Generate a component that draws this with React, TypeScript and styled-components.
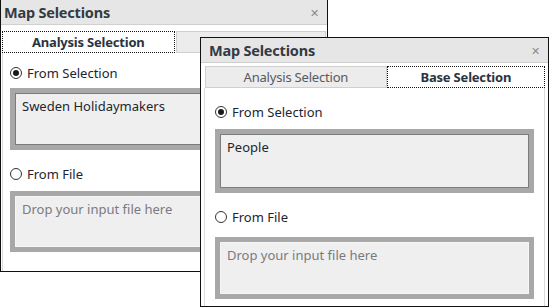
import React from "react";
import styled, { createGlobalStyle } from "styled-components";

const GlobalStyle = createGlobalStyle`
  html, body {
    margin: 0;
    padding: 0;
    background: #ffffff;
    font-family: "Noto Sans", "Open Sans", sans-serif;
  }
`;

const Desktop = styled.div`
  position: relative;
  width: 550px;
  height: 308px;
  overflow: hidden;
  background: #ffffff;
`;

const Frame = styled.div<{ $left: number; $top: number; $width: number; $height: number }>`
  position: absolute;
  left: ${(p) => p.$left}px;
  top: ${(p) => p.$top}px;
  width: ${(p) => p.$width}px;
  height: ${(p) => p.$height}px;
  box-sizing: border-box;
  border: 1px solid #111111;
  background: #ffffff;
  display: flex;
  flex-direction: column;
`;

const TitleBar = styled.div<{ $pad: number }>`
  height: 24px;
  flex: none;
  display: flex;
  align-items: center;
  justify-content: space-between;
  padding: 0 8px 0 ${(p) => p.$pad}px;
  background: #e6e6e6;
  border-bottom: 1px solid #cfcfcf;
`;

const Title = styled.span`
  font-size: 14.5px;
  font-weight: 700;
  color: #333a44;
  letter-spacing: -0.2px;
`;

const Close = styled.span`
  font-size: 11px;
  color: #8a8a8a;
  line-height: 1;
`;

const TabRow = styled.div<{ $top: number; $side: number }>`
  display: flex;
  margin: ${(p) => p.$top}px ${(p) => p.$side}px 0;
  height: 22px;
  flex: none;
`;

const Tab = styled.div<{ $active?: boolean; $grow: number }>`
  flex: ${(p) => p.$grow} 1 0;
  display: flex;
  align-items: center;
  justify-content: center;
  box-sizing: border-box;
  font-size: 13px;
  letter-spacing: -0.2px;
  font-weight: ${(p) => (p.$active ? 700 : 400)};
  color: ${(p) => (p.$active ? "#2b3340" : "#555a60")};
  background: ${(p) => (p.$active ? "#ffffff" : "#ececec")};
  border: ${(p) => (p.$active ? "1px dotted #111111" : "1px solid #cfcfcf")};
  margin-left: ${(p) => (p.$active ? "0" : "1px")};
`;

const Panel = styled.div<{ $pad: number; $side: number }>`
  flex: 1;
  display: flex;
  flex-direction: column;
  margin: 0 ${(p) => p.$side}px;
  padding: 0 ${(p) => p.$pad}px;
  border-left: 1px solid #dcdcdc;
  border-right: 1px solid #dcdcdc;
`;

const RadioRow = styled.label<{ $top: number }>`
  display: flex;
  align-items: center;
  gap: 5px;
  height: 14px;
  margin-top: ${(p) => p.$top}px;
  font-size: 13px;
  color: #1e2530;
`;

const RadioCircle = styled.span<{ $checked?: boolean }>`
  width: 12px;
  height: 12px;
  box-sizing: border-box;
  border-radius: 50%;
  border: 1px solid #333333;
  background: #ffffff;
  display: flex;
  align-items: center;
  justify-content: center;
  flex: none;

  &::after {
    content: "";
    width: 6px;
    height: 6px;
    border-radius: 50%;
    background: ${(p) => (p.$checked ? "#1a1a1a" : "transparent")};
  }
`;

const Field = styled.div<{ $top: number; $height: number; $placeholder?: boolean }>`
  margin-top: ${(p) => p.$top}px;
  height: ${(p) => p.$height}px;
  box-sizing: border-box;
  border: 5px solid #a8a8a8;
  background: #a8a8a8;
  flex: none;

  & > div {
    height: 100%;
    box-sizing: border-box;
    border: 1px solid ${(p) => (p.$placeholder ? "#f6f6f6" : "#7c7c7c")};
    background: #efefef;
    padding: 3px 6px;
    font-size: 13px;
    color: ${(p) => (p.$placeholder ? "#7a7a80" : "#1e2530")};
  }
`;

type Layout = {
  left: number;
  top: number;
  width: number;
  height: number;
  titlePad: number;
  tabTop: number;
  tabSide: number;
  pad: number;
  radioTop: number;
  boxTop: number;
  boxHeight: number;
  fileTop: number;
  dropTop: number;
  dropHeight: number;
};

function Dialog({
  layout,
  active,
  selection,
}: {
  layout: Layout;
  active: "analysis" | "base";
  selection: string;
}) {
  return (
    <Frame $left={layout.left} $top={layout.top} $width={layout.width} $height={layout.height}>
      <TitleBar $pad={layout.titlePad}>
        <Title>Map Selections</Title>
        <Close>✕</Close>
      </TitleBar>
      <TabRow $top={layout.tabTop} $side={layout.tabSide}>
        <Tab $grow={1.15} $active={active === "analysis"}>
          Analysis Selection
        </Tab>
        <Tab $grow={1} $active={active === "base"}>
          Base Selection
        </Tab>
      </TabRow>
      <Panel $pad={layout.pad} $side={layout.tabSide}>
        <RadioRow $top={layout.radioTop}>
          <RadioCircle $checked />
          From Selection
        </RadioRow>
        <Field $top={layout.boxTop} $height={layout.boxHeight}>
          <div>{selection}</div>
        </Field>
        <RadioRow $top={layout.fileTop}>
          <RadioCircle />
          From File
        </RadioRow>
        <Field $top={layout.dropTop} $height={layout.dropHeight} $placeholder>
          <div>Drop your input file here</div>
        </Field>
      </Panel>
    </Frame>
  );
}

const backLayout: Layout = {
  left: 0,
  top: -1,
  width: 328,
  height: 273,
  titlePad: 3,
  tabTop: 6,
  tabSide: 1,
  pad: 7,
  radioTop: 13,
  boxTop: 8,
  boxHeight: 62,
  fileTop: 17,
  dropTop: 10,
  dropHeight: 61,
};

const frontLayout: Layout = {
  left: 200,
  top: 37,
  width: 349,
  height: 270,
  titlePad: 8,
  tabTop: 3,
  tabSide: 3,
  pad: 10,
  radioTop: 17,
  boxTop: 10,
  boxHeight: 64,
  fileTop: 17,
  dropTop: 13,
  dropHeight: 62,
};

export default function App() {
  return (
    <>
      <GlobalStyle />
      <Desktop>
        <Dialog layout={backLayout} active="analysis" selection="Sweden Holidaymakers" />
        <Dialog layout={frontLayout} active="base" selection="People" />
      </Desktop>
    </>
  );
}
